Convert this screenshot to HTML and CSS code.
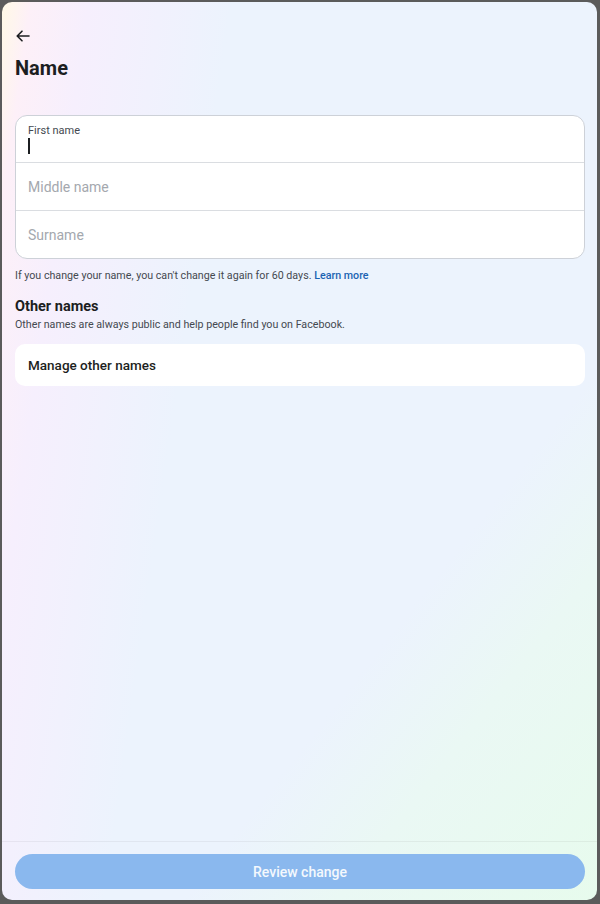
FILE: index.html
```html
<!DOCTYPE html>
<html lang="en">
<head>
  <meta charset="UTF-8" />
  <meta name="viewport" content="width=device-width, initial-scale=1.0" />
  <title>Name</title>
  <link rel="stylesheet" href="styles.css">
</head>
<body>
  <div class="screen">
    <main class="content">
      <button class="back" aria-label="Back">
        <svg width="16" height="16" viewBox="0 0 16 16" fill="none" stroke="#1c1e21" stroke-width="1.6" stroke-linecap="round" stroke-linejoin="round">
          <path d="M14 8H2.5M7 3.2L2.2 8L7 12.8" />
        </svg>
      </button>
      <h1>Name</h1>

      <div class="fields">
        <label class="field active">
          <span class="field-label">First name</span>
          <span class="cursor"></span>
        </label>
        <label class="field">
          <span class="placeholder">Middle name</span>
        </label>
        <label class="field">
          <span class="placeholder">Surname</span>
        </label>
      </div>
      <p class="hint">If you change your name, you can't change it again for 60 days. <a href="#">Learn more</a></p>

      <h2>Other names</h2>
      <p class="sub">Other names are always public and help people find you on Facebook.</p>
      <div class="card">Manage other names</div>
    </main>

    <footer class="footer">
      <button class="review">Review change</button>
    </footer>
  </div>
</body>
</html>
```

FILE: styles.css
```css
body {
  margin: 0;
  background: #5b5b5b;
  font-family: Roboto, "Noto Sans", Arial, sans-serif;
  color: #1c1e21;
}

.screen {
  margin: 2px 3px 4px 2px;
  height: 898px;
  border-radius: 10px;
  overflow: hidden;
  display: flex;
  flex-direction: column;
  background:
    linear-gradient(128deg, rgba(231, 251, 236, 0) 68%, #eaf8f4 80%, #e7fbed 100%),
    linear-gradient(98deg, #fff9e6 0%, #fdf0f8 4%, #f6effd 12%, rgba(236, 243, 253, 0) 32%),
    #ecf3fd;
}

.content {
  flex: 1;
  padding: 0 12px 0 13px;
}

.back {
  display: block;
  margin: 26px 0 0 0;
  padding: 0;
  border: none;
  background: none;
  width: 16px;
  height: 16px;
}

h1 {
  margin: 11px 0 0;
  font-size: 20px;
  font-weight: 700;
  line-height: 26px;
}

.fields {
  margin-top: 34px;
  background: #fff;
  border: 1px solid #cdd1d8;
  border-radius: 12px;
  overflow: hidden;
}

.field {
  display: flex;
  flex-direction: column;
  justify-content: center;
  height: 47px;
  padding: 0 12px;
  border-top: 1px solid #dadde1;
}

.field:first-child {
  border-top: none;
  justify-content: flex-start;
  padding-top: 8px;
  height: 38px;
}

.field-label {
  font-size: 11px;
  line-height: 14px;
  color: #444950;
}

.cursor {
  display: block;
  width: 2px;
  height: 16px;
  background: #1c1e21;
}

.placeholder {
  font-size: 14px;
  color: #a4a8ae;
}

.hint {
  margin: 10px 0 0;
  font-size: 10.7px;
  line-height: 14px;
  color: #444950;
}

.hint a {
  color: #1b63b3;
  font-weight: 500;
  text-decoration: none;
}

h2 {
  margin: 15px 0 0;
  font-size: 14.5px;
  font-weight: 700;
  line-height: 18px;
}

.sub {
  margin: 2px 0 0;
  font-size: 10.7px;
  line-height: 14px;
  color: #444950;
}

.card {
  margin-top: 12px;
  height: 42px;
  display: flex;
  align-items: center;
  padding: 0 13px;
  background: #fff;
  border-radius: 10px;
  font-size: 13.5px;
  font-weight: 500;
}

.footer {
  border-top: 1px solid rgba(0, 0, 0, 0.05);
  padding: 12px 12px 11px 13px;
}

.review {
  display: block;
  width: 100%;
  height: 35px;
  border: none;
  border-radius: 18px;
  background: #8ab8ee;
  color: #f4f8fd;
  font-family: inherit;
  font-size: 14px;
  font-weight: 500;
}
```
